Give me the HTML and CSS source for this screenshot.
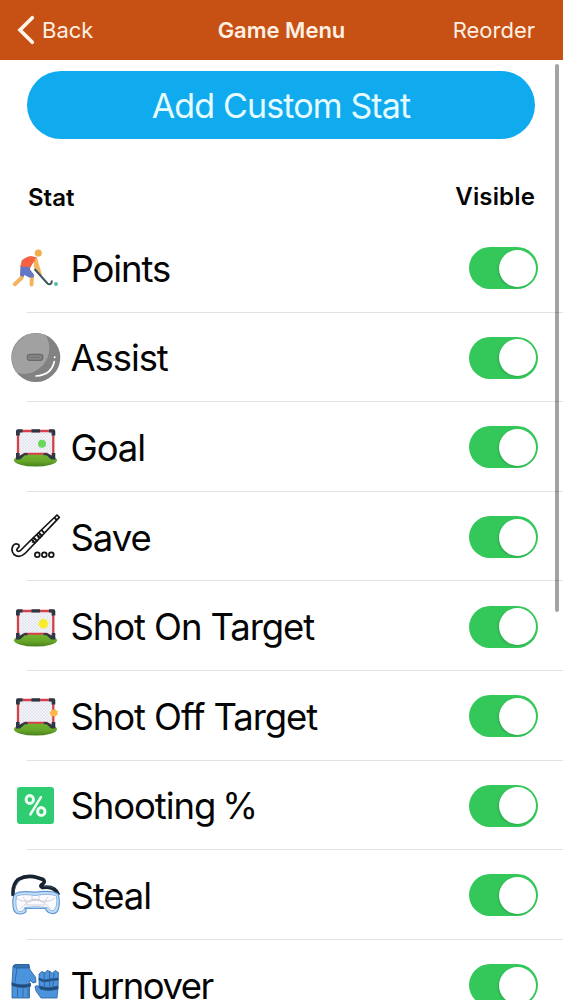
FILE: index.html
```html
<!DOCTYPE html>
<html lang="en">
<head>
  <meta charset="UTF-8">
  <meta name="viewport" content="width=device-width, initial-scale=1">
  <title>Game Menu</title>
  <link rel="stylesheet" href="styles.css">
</head>
<body>

  <!-- Shared goal drawing -->
  <svg class="defs" width="0" height="0">
    <defs>
      <pattern id="net" width="3" height="3" patternUnits="userSpaceOnUse">
        <rect width="3" height="3" fill="#f4f5fa"/>
        <path d="M0 0L3 3M3 0L0 3" stroke="#d8dbe5" stroke-width=".5"/>
      </pattern>
      <linearGradient id="grass" x1="0" y1="0" x2="0" y2="1">
        <stop offset="0" stop-color="#76b52f"/>
        <stop offset=".6" stop-color="#64a428"/>
        <stop offset="1" stop-color="#47801c"/>
      </linearGradient>
      <symbol id="goal" viewBox="0 0 50 50">
        <ellipse cx="24.500" cy="38.200" rx="21.500" ry="6.400" fill="url(#grass)"/>
        <path d="M7 9h35v25l-6-2H13L7 34z" fill="url(#net)"/>
        <path d="M7 35V9H42.300V35" fill="none" stroke="#d4414b" stroke-width="2.300"/>
        <path d="M8 35l6-3.200h21.500l6.500 3.200" fill="none" stroke="#d4414b" stroke-width="1.900"/>
        <path d="M5 13.500V9.200q0-2 2-2h4.500v3.400H8.800v2.900zM44.300 13.500V9.200q0-2-2-2H38v3.400h2.600v2.900zM20.500 7.200h8.500v3.300h-8.500zM5 31h3.600v3l5-3 3 .2v2h-2.800L9 37.500H5zM44.300 31h-3.600v3l-5-3-3 .2v2h2.800l4.800 4.300h4z" fill="#2c3845"/>
      </symbol>
    </defs>
  </svg>

  <header class="navbar">
    <div class="back">
      <svg class="chevron" width="18" height="30" viewBox="0 0 18 30">
        <path d="M15.300 2.800L3 15L15.300 27.200" fill="none" stroke="#fff6ea" stroke-width="3.700" stroke-linecap="round"/>
      </svg>
      <span>Back</span>
    </div>
    <h1>Game Menu</h1>
    <div class="reorder">Reorder</div>
  </header>

  <button class="add-button" type="button">Add Custom Stat</button>

  <div class="list-header">
    <span>Stat</span>
    <span class="visible">Visible</span>
  </div>

  <ul class="stats">
    <li>
      <svg class="icon" viewBox="0 0 50 50">
        <path d="M12 28.500L10.500 35L3.800 41.200" fill="none" stroke="#f4b45c" stroke-width="4" stroke-linecap="round" stroke-linejoin="round"/>
        <path d="M17 29l4 4.500-.5 8" fill="none" stroke="#f4b45c" stroke-width="4" stroke-linecap="round" stroke-linejoin="round"/>
        <path d="M9.500 22l10 1-.5 3.500 4 5-.5 3H18l-4.500-2.500-1.500 2-3-1.500z" fill="#6577c4"/>
        <path d="M9.500 23.500l1.200-6Q15 13.500 20 13l6 1.500.5 5-4-.3-3 5z" fill="#f56242"/>
        <path d="M25 16.500l2.500 8.500 2 6.500M24.500 19l-.5 4.500 5 6" fill="none" stroke="#f4b45c" stroke-width="2.700" stroke-linecap="round" stroke-linejoin="round"/>
        <circle cx="27.300" cy="10" r="3.600" fill="#f2ae4e"/>
        <path d="M24 26.500L36.500 40.500q2.300 2 4-.8l.3-1.500" fill="none" stroke="#3f555c" stroke-width="2" stroke-linecap="round"/>
        <circle cx="45" cy="41" r="2" fill="#54c1a1"/>
      </svg>
      <span class="label">Points</span>
      <span class="switch"></span>
    </li>
    <li>
      <svg class="icon" viewBox="0 0 50 50">
        <circle cx="24.800" cy="24.500" r="24.500" fill="#828282"/>
        <path d="M1 27.500A24.500 24.500 0 0 1 35 2.300Q43 18.500 32 32Q20 44.500 5.500 39.500Q2 34.500 1 27.500z" fill="#a2a1a1"/>
        <rect x="16.300" y="21.300" width="15.500" height="6" rx="2.500" fill="#858484" stroke="#6a6a6a" stroke-width="1.200"/>
        <path d="M19 24.400h10" stroke="#757575" stroke-width="1"/>
        <path d="M25 43Q40.500 42 43.300 28.500" fill="none" stroke="#fff" stroke-width="1.700" stroke-linecap="round"/>
        <circle cx="43.700" cy="24.300" r="1" fill="#fff"/>
      </svg>
      <span class="label">Assist</span>
      <span class="switch"></span>
    </li>
    <li>
      <svg class="icon" viewBox="0 0 50 50">
        <use href="#goal"/>
        <circle cx="31" cy="21.800" r="4" fill="#68d75b"/>
      </svg>
      <span class="label">Goal</span>
      <span class="switch"></span>
    </li>
    <li>
      <svg class="icon" viewBox="0 0 50 50" fill="none" stroke="#151515" stroke-width="1.700" stroke-linejoin="round">
        <path d="M46 3L48.300 5.300L15 40.500Q8.500 47 3 42.500Q-.7 38 2.200 33.500Q4 31 7 32.200Q9 33.500 7.500 35.500Q4.800 37.500 6.500 39Q8.500 40 10.500 37.500L22 26Z"/>
        <path d="M43.500 5.700l2.500 2.700M30.500 18.200l3 3M27.500 20.500l4 4M25.500 22.500l4 4M22.500 25.500l4 4M20.500 27.500l4 4" stroke-width="1.900"/>
        <path d="M21 31l3-5M27 26l2-5" stroke-width="1"/>
        <circle cx="26.300" cy="42.800" r="2.400"/>
        <circle cx="33.300" cy="42.800" r="2.400"/>
        <circle cx="40.300" cy="42.800" r="2.400"/>
      </svg>
      <span class="label">Save</span>
      <span class="switch"></span>
    </li>
    <li>
      <svg class="icon" viewBox="0 0 50 50">
        <use href="#goal"/>
        <path d="M32 16l1.200 1.600 2.300-.2.300 2.200 2 1.200-1.300 2 .4 2.300-2.300.3L33.300 27 32 25.700 29.700 26.300 29 24.300 27 22.700 28.400 20.800 28 18.700 30.400 18z" fill="#f7ec26"/>
      </svg>
      <span class="label">Shot On Target</span>
      <span class="switch"></span>
    </li>
    <li>
      <svg class="icon" viewBox="0 0 50 50">
        <use href="#goal"/>
        <path d="M40.500 18.500l2.300.3 1.300-.8 1.200 1.500 1.700.7-.5 1.600.5 2-2 .8-1 1.500-1.600-.8-2.300.2-.4-2-1.200-1.500 1.400-1.500z" fill="#fdb849"/>
      </svg>
      <span class="label">Shot Off Target</span>
      <span class="switch"></span>
    </li>
    <li>
      <svg class="icon" viewBox="0 0 50 50">
        <rect x="6" y="6" width="37" height="37" rx="3" fill="#2fcc71"/>
        <g fill="none" stroke="#effff5" stroke-width="2.900">
          <ellipse cx="18.800" cy="18.500" rx="3.700" ry="4"/>
          <ellipse cx="30.300" cy="30.500" rx="3.700" ry="4"/>
          <path d="M30 16L19.300 33.500" stroke-width="2.400" stroke-linecap="round"/>
        </g>
      </svg>
      <span class="label percent">Shooting %</span>
      <span class="switch"></span>
    </li>
    <li>
      <svg class="icon" viewBox="0 0 50 50" fill="none">
        <path d="M2.300 26Q1 15 7 9.500Q16 4.500 26 7.500L32 9.500Q35 12 31 14.500Q28.500 16.500 31.500 17.500Q44 15.500 47.500 25" stroke="#17242f" stroke-width="3.700"/>
        <path d="M3 24Q3.500 15 9 10.500M32.500 16.500Q39 16 43 18" stroke="#40556a" stroke-width=".8"/>
        <path d="M4 24Q9 20.500 24 22.200Q41 20 47 24Q49 29 48 36Q47.500 44 41 43.500Q36 43 34.500 38.500H14.500Q17 44 8 44Q2.500 43.500 2 36Q1 28 4 24z" fill="#c2def7" stroke="#5f97d2" stroke-width="1.200"/>
        <path d="M5.500 26Q12 23.500 24 25.500Q39 23 45.500 26Q47 38 42 41Q38 41 36.500 37.500Q25 36 13.500 37.500Q13 42 8 41.500Q3.500 39 5.500 26z" fill="#fafbff" stroke="#8cb6e2" stroke-width="1"/>
        <path d="M6 28q5 6 18 1q14 5 20-1M9 39q7-8 15.500-9M40 39q-7-8-15.500-9M12 27l4 6M37 27l-4 6M15 35h19M21 26v4h7v-4" stroke="#c8c5d0" stroke-width=".8"/>
      </svg>
      <span class="label">Steal</span>
      <span class="switch"></span>
    </li>
    <li>
      <svg class="icon" viewBox="0 0 50 50" stroke="#285e98" stroke-width=".8">
        <path d="M2 6l4-1.500 12 .2 1 5 5.500 7.500 .5 5-3 .8-3-3-.5 6V38H1V23z" fill="#4b94dd"/>
        <path d="M2 6l2-1.500 14 .2V8H4z" fill="#3473b4"/>
        <path d="M1 22.500q9 4 18.500 1v3Q9 29 1 25.500z" fill="#214873"/>
        <path d="M6 8L4 22M6.500 28v9M12 28v9M17 28v9" fill="none"/>
        <path d="M28 27V14l3-2.500 3 1.500 2-2.500 3.500 1 1.500 2 3-3 3.500 2L47 28l-1 10H30l-5-7-1-4.500 2-1z" fill="#4b94dd"/>
        <path d="M28 18l5 2 6-1 8-1v2l-8 1-6 1-5-2zM28 26q9 3 19 0v3q-10 3-18 0z" fill="#214873"/>
        <path d="M33 12l.5 14M38.500 12v14M43 13l-1 13" fill="none"/>
      </svg>
      <span class="label turnover">Turnover</span>
      <span class="switch"></span>
    </li>
  </ul>

  <div class="scrollbar"></div>

</body>
</html>
```

FILE: styles.css
```css
* {
  box-sizing: border-box;
}

body {
  margin: 0;
  height: 1000px;
  overflow: hidden;
  background: #fff;
  color: #050505;
  font-family: Inter, sans-serif;
}

.defs {
  display: block;
}

.navbar {
  display: grid;
  grid-template-columns: 1fr auto 1fr;
  align-items: center;
  height: 60px;
  background: #c75115;
  color: #fff0e2;
  font-size: 22px;
}

.back {
  display: flex;
  align-items: center;
  gap: 7px;
  padding-left: 17px;
}

.chevron {
  display: block;
}

.navbar h1 {
  margin: 0;
  font-size: 22px;
  font-weight: 600;
}

.reorder {
  padding-right: 28px;
  text-align: right;
}

.add-button {
  display: block;
  width: 508px;
  height: 68px;
  margin: 11px 0 0 27px;
  padding: 0;
  border: none;
  border-radius: 34px;
  background: #10abef;
  color: #e6fbff;
  font-family: inherit;
  font-size: 34px;
  letter-spacing: -0.85px;
}

.list-header {
  display: flex;
  justify-content: space-between;
  align-items: center;
  height: 84px;
  padding: 32px 28px 0;
  font-size: 24px;
  font-weight: 600;
}

.visible {
  margin-top: -2px;
  letter-spacing: 0.15px;
}

.stats {
  margin: 0;
  padding: 0;
  list-style: none;
}

.stats li {
  display: flex;
  align-items: center;
  height: 89.6px;
  padding: 1px 25px 0 11px;
  background: linear-gradient(#e2e2e2, #e2e2e2) 27px 100% / 100% 1px no-repeat;
}

.icon {
  flex: none;
  width: 50px;
  height: 50px;
  margin-right: 9.5px;
}

.label {
  flex: 1;
  padding-top: 1px;
  font-size: 36.5px;
  line-height: 44px;
  letter-spacing: -1.1px;
  white-space: nowrap;
}

.percent {
  word-spacing: -2px;
}

.turnover {
  letter-spacing: -1.5px;
}

.switch {
  width: 69px;
  height: 42px;
  padding: 2.5px 2px;
  border-radius: 21px;
  background: #34c759;
}

.switch::after {
  content: "";
  display: block;
  width: 37px;
  height: 37px;
  margin-left: auto;
  border-radius: 50%;
  background: #fff;
  box-shadow: -1px 1px 2px rgba(0, 0, 0, 0.15);
}

/* Overlays the list like the native scroll indicator */
.scrollbar {
  position: absolute;
  top: 64px;
  right: 4px;
  width: 4px;
  height: 548px;
  border-radius: 2px;
  background: rgba(0, 0, 0, 0.36);
}
```
